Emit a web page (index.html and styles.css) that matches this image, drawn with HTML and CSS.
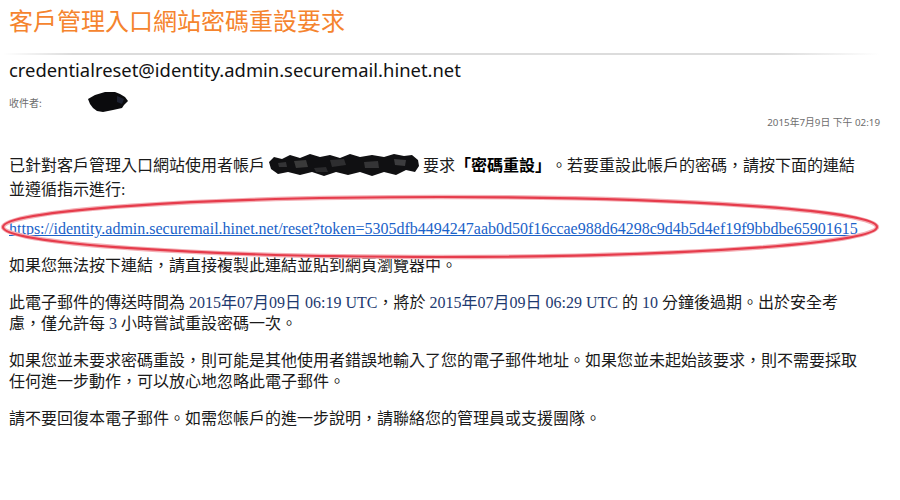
FILE: index.html
```html
<!DOCTYPE html>
<html lang="zh-Hant">
<head>
<meta charset="utf-8">
<title>客戶管理入口網站密碼重設要求</title>
<link rel="stylesheet" href="styles.css">
</head>
<body>
<div class="mail">
  <h1 class="title">客戶管理入口網站密碼重設要求</h1>
  <div class="divider"></div>
  <div class="sender">credentialreset@identity.admin.securemail.hinet.net</div>
  <div class="recipient">
    <span class="label">收件者:</span>
    <svg class="redact-small" width="42" height="22" viewBox="0 0 42 22" aria-hidden="true">
      <path d="M1 8 L8 4 L18 1 L28 1 L33 3 L38 6 L41 10 L37 14 L35 17 L26 19 L16 21 L10 20 L6 17 L3 13 Z" fill="#0b0b0d"/>
      <path d="M30 5 L37 8 L35 13 L30 11 Z" fill="#1d2130"/>
    </svg>
  </div>
  <div class="date">2015年7月9日 下午 02:19</div>

  <div class="content">
    <p class="first">已針對客戶管理入口網站使用者帳戶<svg class="redact-big" width="152" height="24" viewBox="0 0 152 24" aria-hidden="true"><path d="M1 9 L6 4 L14 6 L22 2 L32 5 L42 1 L52 4 L62 2 L72 5 L82 1 L92 4 L104 2 L116 4 L126 1 L136 3 L144 2 L150 7 L151 13 L147 19 L138 17 L128 22 L116 19 L104 23 L92 19 L80 22 L68 19 L56 23 L44 19 L32 22 L20 19 L10 21 L3 16 Z" fill="#101012"/><path d="M26 8 L38 7 L40 14 L28 15 Z" fill="#3a3a3a"/><path d="M62 7 L76 6 L78 12 L64 14 Z" fill="#2e2e30"/><path d="M96 9 L110 8 L111 15 L97 15 Z" fill="#343436"/><path d="M126 6 L138 7 L137 13 L127 12 Z" fill="#3c3c3e"/><path d="M46 15 L58 14 L60 19 L48 19 Z" fill="#2a2a2c"/><path d="M10 10 L18 9 L19 14 L11 14 Z" fill="#333335"/></svg>要求<b>「密碼重設」</b>。若要重設此帳戶的密碼，請按下面的連結並遵循指示進行:</p>
    <p class="linkline"><a class="reset-link" href="#">https://identity.admin.securemail.hinet.net/reset?token=5305dfb4494247aab0d50f16ccae988d64298c9d4b5d4ef19f9bbdbe65901615</a></p>
    <p>如果您無法按下連結，請直接複製此連結並貼到網頁瀏覽器中。</p>
    <p>此電子郵件的傳送時間為 <span class="dt">2015年07月09日 06:19 UTC</span>，將於 <span class="dt">2015年07月09日 06:29 UTC</span> 的 <span class="dt">10</span> 分鐘後過期。出於安全考慮，僅允許每 <span class="dt">3</span> 小時嘗試重設密碼一次。</p>
    <p>如果您並未要求密碼重設，則可能是其他使用者錯誤地輸入了您的電子郵件地址。如果您並未起始該要求，則不需要採取任何進一步動作，可以放心地忽略此電子郵件。</p>
    <p>請不要回復本電子郵件。如需您帳戶的進一步說明，請聯絡您的管理員或支援團隊。</p>
  </div>

  <svg class="circle" width="900" height="80" viewBox="0 190 900 80" aria-hidden="true">
    <ellipse cx="440" cy="227" rx="437" ry="30" fill="none" stroke="#f4b0b6" stroke-width="4.5"/>
    <ellipse cx="440" cy="227" rx="437" ry="30" fill="none" stroke="#e63c4c" stroke-width="2.2"/>
  </svg>
</div>
</body>
</html>
```

FILE: styles.css
```css
html, body {
  margin: 0;
  padding: 0;
  background: #ffffff;
}

.mail {
  position: relative;
  width: 900px;
  height: 500px;
  overflow: hidden;
}

.title {
  margin: 5px 0 0 0;
  padding-left: 9px;
  font-family: "Noto Sans CJK TC", sans-serif;
  font-weight: 400;
  font-size: 24px;
  line-height: 30px;
  color: #f5842e;
}

.divider {
  margin: 18px 20px 0 3px;
  height: 2px;
  background: linear-gradient(to right, rgba(220,220,220,0), #dcdcdc 8%, #dcdcdc 88%, rgba(220,220,220,0));
}

.sender {
  margin-top: 3px;
  padding-left: 9px;
  font-family: "Noto Sans", "Open Sans", sans-serif;
  font-size: 18.4px;
  line-height: 24px;
  color: #111111;
}

.recipient {
  margin-top: 10px;
  padding-left: 9px;
  display: flex;
  align-items: center;
  gap: 45px;
  height: 20px;
}

.label {
  font-family: "Noto Sans CJK TC", sans-serif;
  font-size: 10px;
  color: #6d6d6d;
}

.redact-small {
  display: block;
}

.date {
  margin-top: 3px;
  padding-right: 20px;
  text-align: right;
  font-family: "Noto Sans", "Noto Sans CJK TC", sans-serif;
  font-size: 9.8px;
  line-height: 16px;
  color: #6d6d6d;
}

.content {
  margin-top: 22px;
  padding-left: 9px;
  width: 855px;
  font-family: "Liberation Serif", "Noto Sans CJK TC", serif;
  font-size: 16px;
  line-height: 21px;
  color: #1a1a1a;
  text-spacing-trim: space-all;
}

.content p {
  margin: 0 0 16px 0;
}

.content p.first {
  line-height: 24px;
}

.content b {
  font-weight: 700;
  color: #000;
}

.redact-big {
  display: inline-block;
  vertical-align: -6px;
  margin: 0 3px;
}

.reset-link {
  color: #1a62c9;
  text-decoration: underline;
  white-space: nowrap;
}

.dt {
  color: #1e3a70;
}

.circle {
  position: absolute;
  left: 0;
  top: 190px;
  pointer-events: none;
}
```
